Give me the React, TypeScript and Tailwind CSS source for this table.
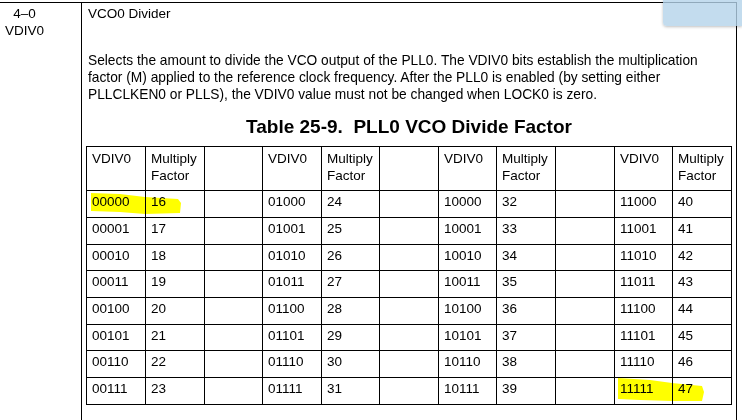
import React from 'react';

const rows: [string, string][][] = [
  [['00000', '16'], ['01000', '24'], ['10000', '32'], ['11000', '40']],
  [['00001', '17'], ['01001', '25'], ['10001', '33'], ['11001', '41']],
  [['00010', '18'], ['01010', '26'], ['10010', '34'], ['11010', '42']],
  [['00011', '19'], ['01011', '27'], ['10011', '35'], ['11011', '43']],
  [['00100', '20'], ['01100', '28'], ['10100', '36'], ['11100', '44']],
  [['00101', '21'], ['01101', '29'], ['10101', '37'], ['11101', '45']],
  [['00110', '22'], ['01110', '30'], ['10110', '38'], ['11110', '46']],
  [['00111', '23'], ['01111', '31'], ['10111', '39'], ['11111', '47']],
];

const DivideTable = () => {
  const cells: React.ReactNode[] = [];
  // header row
  for (let g = 0; g < 4; g++) {
    cells.push(
      <div key={`h${g}a`} className="border-l border-t border-black pl-[5px] pt-[3px]">
        VDIV0
      </div>
    );
    cells.push(
      <div key={`h${g}b`} className="border-l border-t border-black pl-[5px] pt-[3px]">
        Multiply
        <br />
        Factor
      </div>
    );
    if (g < 3) cells.push(<div key={`h${g}c`} className="border-l border-t border-black" />);
  }
  rows.forEach((row, r) => {
    row.forEach(([code, mult], g) => {
      cells.push(
        <div key={`${r}-${g}a`} className="border-l border-t border-black pl-[5px] pt-[2px]">
          {code}
        </div>
      );
      cells.push(
        <div key={`${r}-${g}b`} className="border-l border-t border-black pl-[5px] pt-[2px]">
          {mult}
        </div>
      );
      if (g < 3) cells.push(<div key={`${r}-${g}c`} className="border-l border-t border-black" />);
    });
  });

  return (
    <div className="ml-[4px] mt-[8px] grid w-[646px] grid-cols-[59px_59px_58px_59px_58px_59px_58px_59px_59px_58px_59px] grid-rows-[44px_27px_27px_26px_27px_27px_26px_27px_27px] border-r border-b border-black">
      {cells}
    </div>
  );
};

export default function App() {
  return (
    <div
      className="relative h-[420px] w-[742px] overflow-hidden bg-white text-[13.5px] leading-[17px] text-black"
      style={{ fontFamily: '"Liberation Sans", Arial, sans-serif' }}
    >
      <div className="mt-[2px] flex h-[418px] w-[737px] border-t border-r border-black">
        <div className="w-[82px] shrink-0 border-r border-black pt-[2px]">
          <div className="w-[49px] text-center">
            4–0
            <br />
            VDIV0
          </div>
        </div>
        <div className="flex-1">
          <div className="pl-[6px] pt-[2px]">VCO0 Divider</div>
          <p className="mt-[30px] pl-[6px] text-[13.75px]">
            Selects the amount to divide the VCO output of the PLL0. The VDIV0 bits establish the multiplication
            <br />
            factor (M) applied to the reference clock frequency. After the PLL0 is enabled (by setting either
            <br />
            PLLCLKEN0 or PLLS), the VDIV0 value must not be changed when LOCK0 is zero.
          </p>
          <div className="mt-[13px] whitespace-pre text-center text-[19px] font-bold leading-[22px]">
            {'Table 25-9.  PLL0 VCO Divide Factor'}
          </div>
          <DivideTable />
        </div>
      </div>

      {/* marker highlights */}
      <svg className="pointer-events-none absolute left-0 top-0 mix-blend-multiply" width="742" height="420">
        <polygon
          fill="#ffff00"
          points="91,193 120,194 145,197 178,199 181,203 180,213 145,214 120,212 91,211"
        />
        <polygon
          fill="#ffff00"
          points="618,378 650,380 672,383 702,386 704,392 702,401 672,401 640,400 618,399"
        />
      </svg>

      {/* sticky note tab */}
      <div className="absolute left-[663px] top-0 h-[26px] w-[79px] rounded-bl-[4px] bg-[#b4d3ea]/80 shadow-[0_1px_3px_rgba(0,0,0,0.25)]" />
    </div>
  );
}
